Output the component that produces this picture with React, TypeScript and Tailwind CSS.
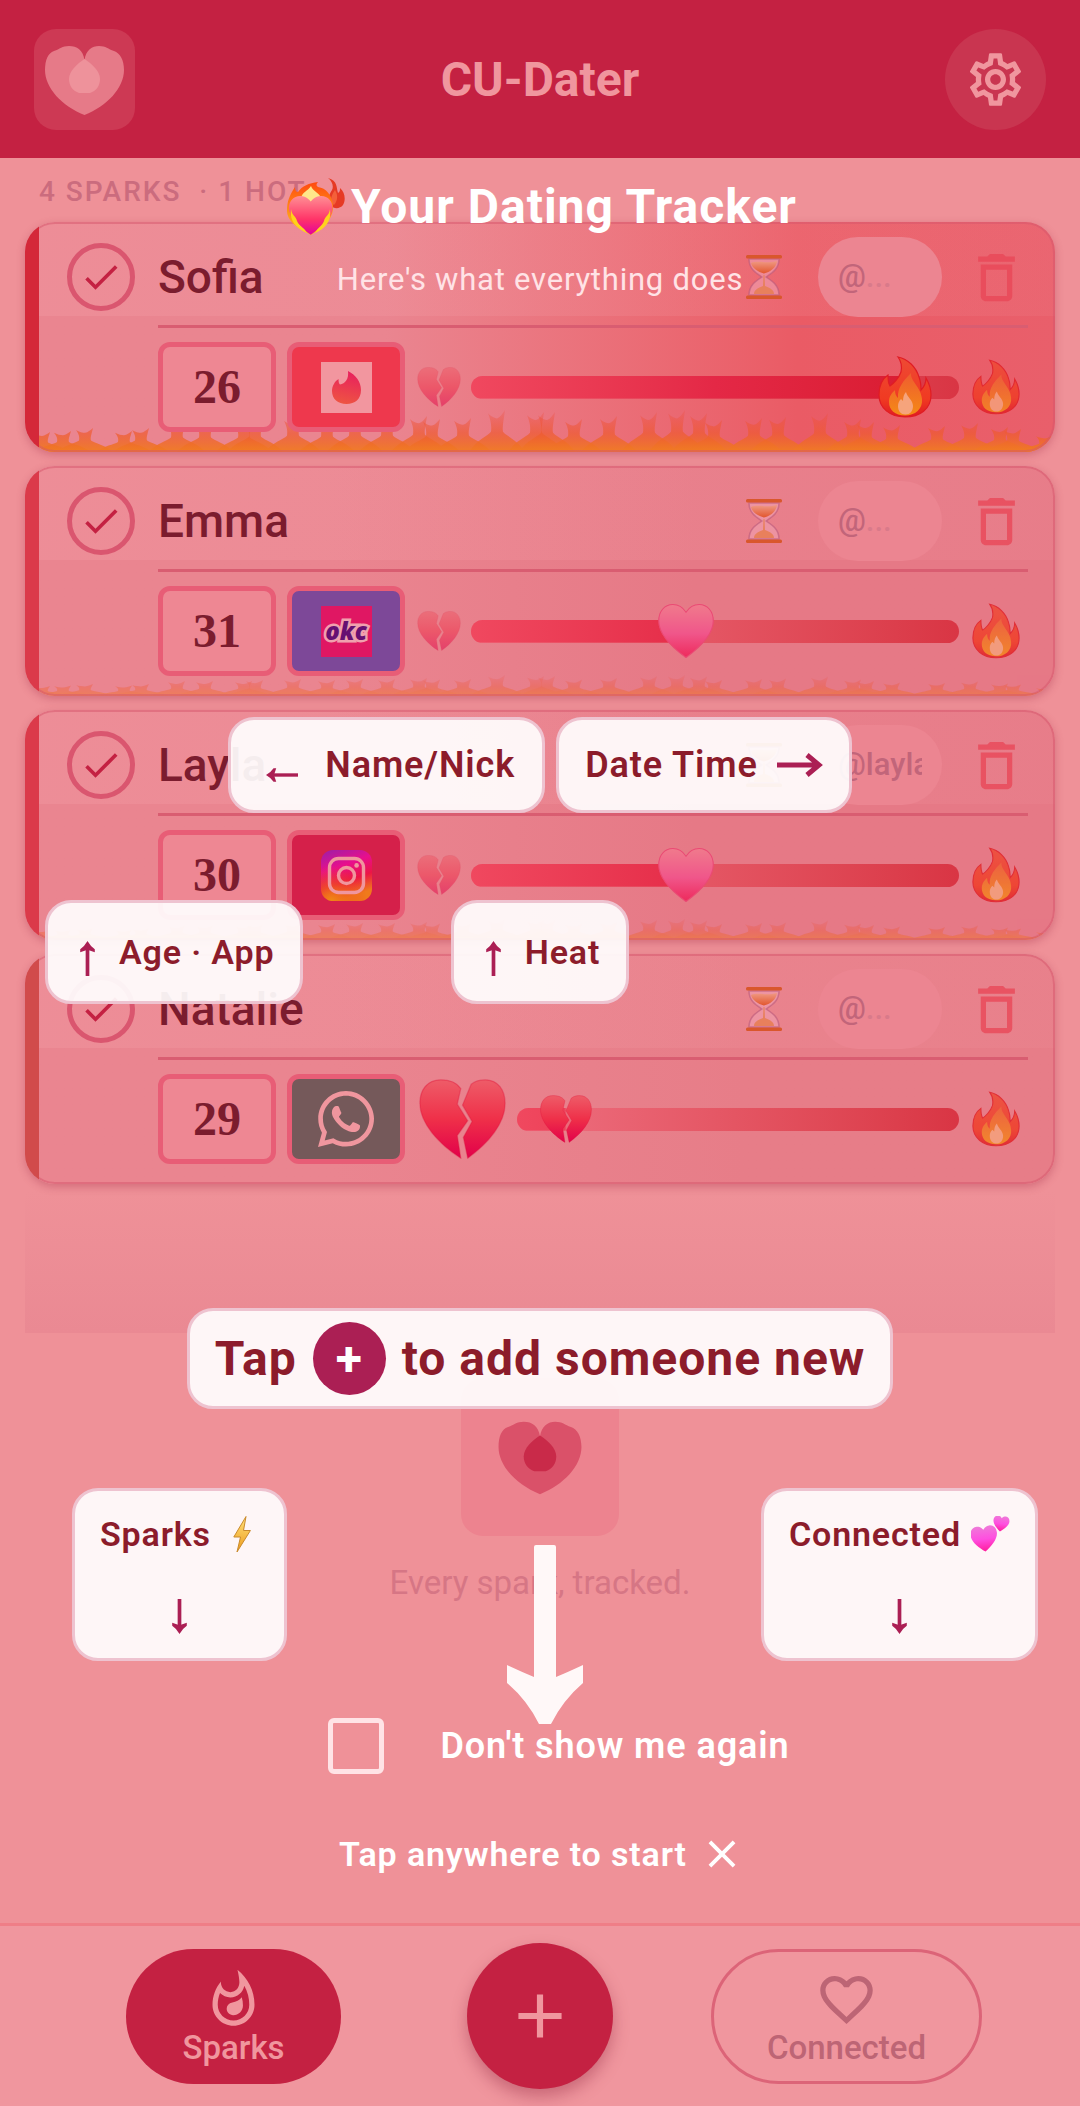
import { useState } from 'react'
import type { ReactNode } from 'react'
import {
  MdAdd, MdCheck, MdClose, MdDeleteOutline, MdFavoriteBorder, MdOutlineSettings, MdOutlineWhatshot,
} from 'react-icons/md'
import { FaWhatsapp } from 'react-icons/fa'

type AppName = 'tinder' | 'okcupid' | 'instagram' | 'whatsapp'

interface Person {
  name: string
  age: number
  app: AppName
  handle: string
  heat: number
  surface: string
  stripe: string
  flame: number
}

const people: Person[] = [
  { name: 'Sofia', age: 26, app: 'tinder', handle: '', heat: 89, flame: 1, stripe: 'bg-[#d42839]', surface: 'bg-linear-to-r from-[#ea8590] from-35% via-[#ea5b65] via-75% to-[#e95f6b]' },
  { name: 'Emma', age: 31, app: 'okcupid', handle: '', heat: 44, flame: 0.5, stripe: 'bg-[#db3a4a]', surface: 'bg-linear-to-r from-[#ea8590] from-30% to-[#e67986] to-65%' },
  { name: 'Layla', age: 30, app: 'instagram', handle: 'layla', heat: 44, flame: 0.5, stripe: 'bg-[#db3a4a]', surface: 'bg-linear-to-r from-[#ea8590] from-30% to-[#e67986] to-65%' },
  { name: 'Natalie', age: 29, app: 'whatsapp', handle: '', heat: 11, flame: 0, stripe: 'bg-[#d14b4b]', surface: 'bg-linear-to-r from-[#ea8590] from-30% to-[#e77d88] to-70%' },
]

const appColors: Record<AppName, string> = {
  tinder: 'bg-[#ee384d]',
  okcupid: 'bg-[#7d4898]',
  instagram: 'bg-[#d5204a]',
  whatsapp: 'bg-[#75595a]',
}

// [x, height] of every flame along the bottom edge of a card
const flames = [
  [17, 20], [38, 21], [60, 24], [99, 21], [116, 24], [152, 30], [180, 30], [219, 30], [230, 32], [268, 34], [302, 32],
  [330, 34], [362, 34], [394, 36], [407, 33], [438, 34], [472, 42], [511, 40], [522, 40], [549, 33], [584, 36],
  [624, 40], [652, 42], [674, 39], [689, 32], [729, 34], [753, 35], [795, 39], [828, 33], [841, 30], [867, 27],
  [912, 26], [945, 29], [975, 25], [988, 23], [1020, 17],
]

function flamePath(x: number, h: number) {
  const b = 50
  const neck = b - h * 0.48
  return `M${x - 28} ${b} C${x - 20} ${b - h * 0.3} ${x - 10} ${b - h * 0.36} ${x - 6} ${neck}` +
    ` C${x - 5} ${b - h * 0.66} ${x - 7} ${b - h * 0.8} ${x - 9} ${b - h * 0.92}` +
    ` C${x - 6} ${b - h * 0.84} ${x - 2} ${b - h * 0.8} ${x} ${b - h * 0.8}` +
    ` C${x + 3} ${b - h * 0.82} ${x + 5} ${b - h * 0.9} ${x + 8} ${b - h}` +
    ` C${x + 7} ${b - h * 0.8} ${x + 5} ${b - h * 0.6} ${x + 6} ${neck}` +
    ` C${x + 10} ${b - h * 0.36} ${x + 20} ${b - h * 0.3} ${x + 28} ${b} Z`
}

function Flames({ scale }: { scale: number }) {
  return (
    <svg
      viewBox="0 0 1030 50"
      preserveAspectRatio="none"
      className={`absolute bottom-0 left-0 h-[50px] w-full ${scale < 1 ? 'opacity-50' : ''}`}
      aria-hidden
    >
      <defs>
        <linearGradient id={`flame-${scale}`} gradientUnits="userSpaceOnUse" x1="0" y1="50" x2="0" y2={50 - 42 * scale}>
          <stop offset="0" stopColor="#f07d22" stopOpacity="0.95" />
          <stop offset="0.45" stopColor="#ee5a30" stopOpacity="0.7" />
          <stop offset="1" stopColor="#ee4a3c" stopOpacity="0.2" />
        </linearGradient>
      </defs>
      {flames.map(([x, h]) => (
        <path key={x} d={flamePath(x, h * scale)} fill={`url(#flame-${scale})`} />
      ))}
    </svg>
  )
}

const HEART = 'M50 14 C42 2 32 0 26 0 C10 0 0 13 0 30 C0 54 24 78 50 97 C76 78 100 54 100 30 C100 13 90 0 74 0 C68 0 58 2 50 14Z'
const FIRE = 'M19 0 C29 2 37 10 40 20 C42 25 42 29 42 33 C45 30 47 26 47 21 C50 26 52 32 52 38 C52 52 41 60 26 60 C11 60 0 51 0 38 C0 30 3 22 9 18 C9 22 9 26 11 29 C14 27 20 21 22 15 C23 10 22 4 19 0Z'

// Gradients shared by all the emoji below
function EmojiDefs() {
  return (
    <svg className="absolute size-0" aria-hidden>
      <defs>
        <linearGradient id="e-broken" x1="0" y1="0" x2="0" y2="1">
          <stop offset="0" stopColor="#ee5c68" />
          <stop offset="0.5" stopColor="#ef3049" />
          <stop offset="1" stopColor="#e2004a" />
        </linearGradient>
        <linearGradient id="e-pink" x1="0" y1="0" x2="0" y2="1">
          <stop offset="0" stopColor="#f07a8c" />
          <stop offset="0.55" stopColor="#f0568a" />
          <stop offset="1" stopColor="#ee2a5c" />
        </linearGradient>
        <linearGradient id="e-fire" x1="0" y1="0" x2="0" y2="1">
          <stop offset="0" stopColor="#ee4a34" />
          <stop offset="0.7" stopColor="#f03a22" />
          <stop offset="1" stopColor="#e01a22" />
        </linearGradient>
        <linearGradient id="e-fire-in" x1="0" y1="0" x2="0" y2="1">
          <stop offset="0" stopColor="#ee5c30" />
          <stop offset="1" stopColor="#f58a16" />
        </linearGradient>
        <linearGradient id="e-magenta" x1="0" y1="0" x2="0" y2="1">
          <stop offset="0" stopColor="#ee7ad8" />
          <stop offset="0.5" stopColor="#ff4fe0" />
          <stop offset="1" stopColor="#ff1c9c" />
        </linearGradient>
        <linearGradient id="e-hot" x1="0" y1="0" x2="0" y2="1">
          <stop offset="0" stopColor="#ff8f94" />
          <stop offset="0.6" stopColor="#ff3468" />
          <stop offset="1" stopColor="#e4009c" />
        </linearGradient>
        <linearGradient id="e-flame" x1="0" y1="0" x2="0" y2="1">
          <stop offset="0" stopColor="#ff4a10" />
          <stop offset="0.5" stopColor="#ff8a18" />
          <stop offset="1" stopColor="#ffc814" />
        </linearGradient>
        <linearGradient id="e-bolt" x1="0" y1="0" x2="0" y2="1">
          <stop offset="0" stopColor="#ffe27a" />
          <stop offset="1" stopColor="#ee9a1c" />
        </linearGradient>
        <linearGradient id="e-sand" x1="0" y1="0" x2="0" y2="1">
          <stop offset="0" stopColor="#f09a84" />
          <stop offset="1" stopColor="#e2562e" />
        </linearGradient>
      </defs>
    </svg>
  )
}

function BrokenHeart({ className }: { className: string }) {
  return (
    <svg viewBox="0 0 100 92" className={className} role="img" aria-label="Broken heart">
      <g fill="url(#e-broken)" stroke="#dc1038" strokeOpacity="0.35" strokeWidth="1.500">
        <path d="M48 11 C42 2 32 1 25 1 C9 1 1 13 1 28 C1 51 23 75 48 91 L44 65 L56 48 L44 29Z" />
        <path d="M60 6 C65 2 71 1 76 1 C91 1 99 13 99 28 C99 51 80 74 56 91 L51 67 L61 49 L50 30Z" />
      </g>
    </svg>
  )
}

function PinkHeart({ className }: { className: string }) {
  return (
    <svg viewBox="-1 -1 102 99" className={className} role="img" aria-label="Heart">
      <path d={HEART} fill="url(#e-pink)" stroke="#ea4a74" strokeWidth="2" />
    </svg>
  )
}

function Fire({ className }: { className: string }) {
  return (
    <svg viewBox="-1 -1 54 62" className={className} role="img" aria-label="Fire">
      <path d={FIRE} fill="url(#e-fire)" stroke="#e01c24" strokeWidth="1.200" />
      <path d="M32 16 C31 24 42 30 43 42 C44 52 36 58.500 26 58.500 C16 58.500 10 53 10 45 C10 39 13 36 16 33 C16 37 17 39 19 41 C18 31 25 23 32 16Z" fill="url(#e-fire-in)" />
      <path d="M27 35 C28 40 34 43 34 49 C34 54 31 57.500 26.500 57.500 C22 57.500 19 54 19 49 C19 46 20 44 22 42 L24 44 C24 40 25 37 27 35Z" fill="#f6a47c" />
    </svg>
  )
}

function Hourglass({ className }: { className: string }) {
  return (
    <svg viewBox="0 0 36 44" className={className} aria-hidden>
      <path
        d="M3 4 C3 14 10 18 16 22 C10 26 3 30 3 40 H33 C33 30 26 26 20 22 C26 18 33 14 33 4Z"
        fill="#f0a0b0" fillOpacity="0.6" stroke="#b9587a" strokeOpacity="0.6" strokeWidth="1.500"
      />
      <path d="M5 8 C12 5 20 9 31 6 C30 13 24 17 18 18.500 C12 17 6 13 5 8Z" fill="url(#e-sand)" />
      <path d="M17.500 20 H18.500 L19 31 C24 33 28 35 28 39 H8 C8 35 12 33 17 31Z" fill="#e8805c" />
      <rect width="36" height="3.400" rx="1.500" fill="#d9572c" />
      <rect y="40.600" width="36" height="3.400" rx="1.500" fill="#d9572c" />
    </svg>
  )
}

function Bolt() {
  return (
    <svg viewBox="0 0 18 37" className="h-[37px] w-[18px]" role="img" aria-label="Lightning">
      <path d="M13 .5 L.8 21 H7.500 L4 36 L17.400 14.500 H10.500 Z" fill="url(#e-bolt)" stroke="#c98a2c" strokeWidth="1" strokeLinejoin="round" />
    </svg>
  )
}

function TwoHearts() {
  return (
    <svg viewBox="0 0 39 36" className="h-9 w-[39px]" role="img" aria-label="Two hearts">
      <path d={HEART} transform="translate(0 10) rotate(-6 13 13) scale(.265)" fill="url(#e-magenta)" />
      <path d={HEART} transform="translate(22 0) rotate(8 8 8) scale(.16)" fill="url(#e-magenta)" />
    </svg>
  )
}

function HeartOnFire() {
  return (
    <svg viewBox="0 0 58 58" className="size-[58px]" role="img" aria-label="Heart on fire">
      <path d="M41 0 C51 3 49 9 51 15 C53 14 53 12 53 10 C58 14 59 22 56 27 C53 31 47 31 44 28 C39 23 42 17 45 12 C47 8 45 3 41 0Z" fill="#e63a24" />
      <path d="M48 12 C51 17 51 22 47 27 C43 25 43 19 48 12Z" fill="#f4603a" />
      <path d="M0 33 C0 24 2 18 8 9 C8 12 9 14 11 14 C15 8 22 5 31 4 C29 6 29 8 31 9 C39 10 45 17 46 27 C47 38 40 48 24 57 C9 50 0 42 0 33Z" fill="url(#e-flame)" />
      <path d="M14 20 C16 13 20 14 24 8 C26 14 32 14 34 20 L24 28Z" fill="#ffe88a" />
      <path d={HEART} transform="translate(2 18) scale(.435 .4)" fill="url(#e-hot)" />
      <path d="M4 31 C5 38 9 38 10 43 C12 48 17 49 20 55 C10 51 2 43 4 31Z M43 31 C42 38 38 38 37 43 C35 48 31 49 28 55 C38 51 45 43 43 31Z" fill="#ffd21c" />
    </svg>
  )
}

function HeartMark({ heart, drop, className }: { heart: string; drop: string; className: string }) {
  return (
    <svg viewBox="0 0 101 101" className={className} aria-hidden>
      <path
        className={heart}
        d="M50.5 31 C49 21 43 17 35 17 C28 17 26 20 20 22 C14 24 11 31 11 41 C11 59 28 77 50.5 86 C73 77 90 59 90 41 C90 31 86 24 80 22 C74 20 72 17 65 17 C58 17 52 21 50.5 31Z"
      />
      <path className={drop} d="M50.5 30 C58 35 66 42 66 50 C66 57 62 62 56 64 H45 C39 62 35 57 35 50 C35 42 43 35 50.5 30Z" />
    </svg>
  )
}

function AppIcon({ app }: { app: AppName }) {
  if (app === 'whatsapp') return <FaWhatsapp size={64} className="text-[#f0969e]" />
  if (app === 'okcupid') {
    return (
      <span className="flex size-[51px] items-center justify-center bg-[#e01763] font-['Open_Sans',sans-serif] text-[24px] leading-none font-extrabold italic text-[#660f72] [-webkit-text-stroke:5px_#f0a0ae] [paint-order:stroke_fill]">
        okc
      </span>
    )
  }
  if (app === 'instagram') {
    return (
      <svg viewBox="0 0 51 51" className="size-[51px]" aria-hidden>
        <defs>
          <linearGradient id="ig-base" x1="0" y1="0" x2="0.35" y2="1">
            <stop offset="0" stopColor="#9a1fa8" />
            <stop offset="0.4" stopColor="#e80f8c" />
            <stop offset="0.7" stopColor="#ec1546" />
            <stop offset="1" stopColor="#f07a1c" />
          </linearGradient>
          <radialGradient id="ig-glow" cx="0.2" cy="1" r="0.7">
            <stop offset="0" stopColor="#f08a14" />
            <stop offset="1" stopColor="#f03a20" stopOpacity="0" />
          </radialGradient>
        </defs>
        <rect width="51" height="51" rx="12" fill="url(#ig-base)" />
        <rect width="51" height="51" rx="12" fill="url(#ig-glow)" />
        <g fill="none" stroke="#f0969e" strokeWidth="3.400">
          <rect x="8.500" y="8.500" width="34" height="34" rx="9" />
          <circle cx="25.500" cy="25.500" r="8" />
        </g>
        <circle cx="35.600" cy="15.400" r="2.300" fill="#f0969e" />
      </svg>
    )
  }
  return (
    <svg viewBox="0 0 51 51" className="size-[51px]" aria-hidden>
      <defs>
        <linearGradient id="tinder" x1="0.6" y1="0" x2="0.4" y2="1">
          <stop offset="0" stopColor="#e8205e" />
          <stop offset="1" stopColor="#ee5442" />
        </linearGradient>
      </defs>
      <rect width="51" height="51" fill="#f2969f" />
      <path
        fill="url(#tinder)"
        d="M27 9 C35 13 40 20 40 28 C40 37 34 42 25.500 42 C17 42 11 37 11 29 C11 24 14 19 17.500 17 C17.500 20 18 22 19 22.500 C24 22 28 17 27 9Z"
      />
    </svg>
  )
}

function HeatThumb({ heat }: { heat: number }) {
  if (heat > 75) return <Fire className="h-[62px] w-[54px]" />
  if (heat > 20) return <PinkHeart className="h-[54px] w-[56px]" />
  return <BrokenHeart className="h-12 w-[52px]" />
}

function HeatSlider({ person }: { person: Person }) {
  const [heat, setHeat] = useState(person.heat)
  return (
    <label className="relative flex h-[60px] flex-1 items-center">
      <span className="sr-only">Heat for {person.name}</span>
      <span className="absolute inset-x-0 h-[23px] rounded-full bg-linear-to-r from-[#ee6f80] to-[#d93544]" />
      <span
        className="absolute inset-x-0 h-[23px] rounded-full bg-linear-to-r from-[#f0485f] via-[#e42846] via-50% to-[#d7192c]"
        style={{ clipPath: `inset(0 ${100 - heat}% 0 0)` }}
      />
      <span className="absolute -translate-x-1/2" style={{ left: `${heat}%` }}>
        <HeatThumb heat={heat} />
      </span>
      <input
        type="range"
        min={0}
        max={100}
        value={heat}
        onChange={(e) => setHeat(Number(e.target.value))}
        className="absolute inset-0 w-full cursor-pointer opacity-0"
      />
    </label>
  )
}

function PersonCard({ person }: { person: Person }) {
  const cold = person.heat < 20
  return (
    <li className={`relative overflow-hidden rounded-[30px] shadow-[0_3px_8px_rgba(150,30,60,0.3)] ${person.surface}`}>
      <div className="absolute inset-x-0 top-0 h-[94px] bg-linear-to-r from-[#f5a0a8]/30 to-[#f5a0a8]/10" />
      {person.flame > 0 && <Flames scale={person.flame} />}
      <div className="pointer-events-none absolute inset-0 rounded-[30px] border-2 border-[#d5566b]/50" />
      <div className={`absolute inset-y-0 left-0 w-3.5 ${person.stripe}`} />

      <div className="relative flex h-[103px] items-center pt-[7px] pl-[42px] pr-[27px]">
        <button
          aria-label={`Connect with ${person.name}`}
          className="flex size-[68px] shrink-0 items-center justify-center rounded-full border-5 border-[#da566f] text-[#c42142]"
        >
          <MdCheck size={44} />
        </button>
        <h2 className="ml-[23px] flex-1 text-[46px] leading-none font-medium text-[#7b1c2e]">{person.name}</h2>
        <button aria-label="Date time" className="flex w-[60px] justify-center">
          <Hourglass className="h-11 w-9" />
        </button>
        <label className="ml-6 flex h-20 w-[124px] items-center rounded-full bg-[#ec8591] px-5 text-[31px] font-medium text-[#c2657a]">
          @
          <input
            defaultValue={person.handle}
            placeholder="..."
            aria-label={`${person.name} handle`}
            className="w-full min-w-0 bg-transparent placeholder:text-[#d97a8a]"
          />
        </label>
        <button aria-label={`Delete ${person.name}`} className="ml-[23px] text-[#e94757]/80">
          <MdDeleteOutline size={63} />
        </button>
      </div>

      <div className="relative ml-[133px] mr-[27px] h-[3px] bg-[#d95d71]" />

      <div className="relative flex h-[124px] items-center pl-[133px] pr-[27px] pb-[6px]">
        <button className="h-[90px] w-[118px] rounded-xl border-5 border-[#e85d76] bg-[#ee8793] font-['Liberation_Serif',serif] text-[48px] leading-none font-bold text-[#7b1c2e]">
          {person.age}
        </button>
        <button
          aria-label={person.app}
          className={`ml-[11px] flex h-[90px] w-[118px] items-center justify-center rounded-xl border-5 border-[#e85d76] ${appColors[person.app]}`}
        >
          <AppIcon app={person.app} />
        </button>
        <span className={`ml-[7px] mr-[5px] flex justify-center ${cold ? 'w-[100px]' : 'w-[54px] opacity-50'}`}>
          <BrokenHeart className={cold ? 'h-20 w-[87px]' : 'h-10 w-11'} />
        </span>
        <HeatSlider person={person} />
        <span className="ml-[5px] flex w-16 justify-center opacity-80">
          <Fire className="h-14 w-12" />
        </span>
      </div>
    </li>
  )
}

function Tip({ children, className = '' }: { children: ReactNode; className?: string }) {
  return (
    <div className={`flex items-center rounded-[26px] border-3 border-[#eec3d0] bg-white/92 text-[#8c1c2b] ${className}`}>
      {children}
    </div>
  )
}

function Arrow({ dir, size, className = '' }: { dir: 'left' | 'up' | 'down'; size: number; className?: string }) {
  const turn = { left: 'rotate-180', up: '-rotate-90', down: 'rotate-90' }[dir]
  return (
    <svg viewBox="0 0 36 36" width={size} height={size} className={`shrink-0 text-[#ab1f54] ${turn} ${className}`} aria-hidden>
      <path d="M0 18 H32" stroke="currentColor" strokeWidth="3.800" />
      <path d="M24.500 10.500 H27.500 Q30 14.500 36 18 Q30 21.500 27.500 25.500 H24.500 L27 18Z" fill="currentColor" />
    </svg>
  )
}

function Guide() {
  return (
    <div className="absolute inset-0 flex flex-col items-center pt-[176px] text-white">
      <h2 className="flex h-[62px] items-center gap-1.5 pl-1 text-[48px] leading-none font-bold tracking-[1px]">
        <HeartOnFire />Your Dating Tracker
      </h2>
      <p className="mt-[22px] flex h-10 items-center text-[31px] tracking-wide text-[#ffe3e6]">
        Here's what everything does
      </p>

      <div className="mt-[417px] flex gap-[11px] text-[36px] font-semibold tracking-wide">
        <Tip className="h-24 gap-[27px] pl-[35px] pr-[27px]"><Arrow dir="left" size={32} className="mt-5" />Name/Nick</Tip>
        <Tip className="h-24 gap-[19px] px-[26px]">
          Date Time
          <svg viewBox="0 0 46 24" className="h-6 w-[46px]" fill="none" stroke="#ab1f54" strokeWidth="5" aria-hidden>
            <path d="M0 12 H42 M30 2 L42 12 L30 22" />
          </svg>
        </Tip>
      </div>

      <div className="mt-[87px] grid w-full grid-cols-3 items-center text-[34px] font-semibold tracking-wide">
        <Tip className="ml-[45px] h-[104px] gap-3.5 justify-self-start pl-[22px] pr-[26px]"><Arrow dir="up" size={35} className="mt-3" />Age · App</Tip>
        <Tip className="h-[104px] gap-3.5 justify-self-center pl-[22px] pr-[26px]"><Arrow dir="up" size={35} className="mt-3" />Heat</Tip>
      </div>

      <Tip className="mt-[304px] h-[101px] gap-4 px-[25px] text-[48px] font-bold tracking-[1px]">
        Tap
        <span className="flex size-[73px] items-center justify-center rounded-full bg-[#ab1f54] text-white">+</span>
        to add someone new
      </Tip>

      <div className="mt-[79px] grid w-full grid-cols-[1fr_auto_1fr] items-start text-[34px] font-semibold tracking-wide">
        <Tip className="ml-[72px] h-[173px] flex-col justify-between justify-self-start px-[25px] pt-[18px] pb-6">
          <span className="flex h-[50px] items-center gap-[22px] pr-2">Sparks <Bolt /></span>
          <Arrow dir="down" size={35} />
        </Tip>
        <svg viewBox="0 0 76 179" className="mt-[57px] ml-2.5 h-[179px] w-[76px] text-[#fff8f8]" aria-hidden>
          <path
            fill="currentColor"
            d="M29 0 H47 Q49 0 49 2 V132 Q61 127 76 120 V138 Q56 155 44 179 H32 Q20 155 0 138 V120 Q15 127 27 132 V2 Q27 0 29 0Z"
          />
        </svg>
        <Tip className="mr-[42px] h-[173px] flex-col justify-between justify-self-end px-[25px] pt-[18px] pb-6">
          <span className="flex h-[50px] items-center gap-2.5">Connected <TwoHearts /></span>
          <Arrow dir="down" size={35} />
        </Tip>
      </div>

      <label className="-mt-1.5 flex h-14 items-center gap-14 pl-[38px] text-[36px] font-semibold tracking-wide">
        <input type="checkbox" className="size-14 appearance-none rounded-md border-5 border-[#ffe3e6] checked:bg-[#ffe3e6]" />
        Don't show me again
      </label>
      <button className="mt-14 flex h-12 items-center gap-3 pl-1 text-[34px] font-semibold tracking-wide">
        Tap anywhere to start
        <MdClose size={46} />
      </button>
    </div>
  )
}

export default function App() {
  return (
    <div className="relative flex min-h-screen flex-col bg-[#ef9198] font-[Roboto,sans-serif]">
      <EmojiDefs />
      <header className="flex h-[158px] items-center justify-between bg-[#c42142] px-[34px] text-[#f0969e]">
        <div className="rounded-[22px] bg-[#cd3954]">
          <HeartMark className="size-[101px]" heart="fill-[#e67a88]" drop="fill-[#ee929b]" />
        </div>
        <h1 className="pt-0.5 text-[48px] leading-none font-bold">CU-Dater</h1>
        <button aria-label="Settings" className="flex size-[101px] items-center justify-center rounded-full bg-[#c93550]">
          <MdOutlineSettings size={63} />
        </button>
      </header>

      <main className="flex-1 px-[25px]">
        <p className="flex h-16 items-center pt-1 pl-3.5 text-[28px] font-medium tracking-[2px] whitespace-pre text-[#cb6c7e]">
          {'4 SPARKS  · 1 HOT'}
        </p>
        <ul className="flex flex-col gap-3.5">
          {people.map((p) => <PersonCard key={p.name} person={p} />)}
        </ul>
        <div className="mt-1.5 h-[143px] bg-linear-to-b from-[#ef9198] to-[#ea8993]" />
        <div className="mt-[45px] flex flex-col items-center">
          <div className="flex size-[158px] items-center justify-center rounded-[22px] bg-[#ed838f]">
            <HeartMark className="size-[106px]" heart="fill-[#da5169]" drop="fill-[#c92a49]" />
          </div>
          <p className="mt-[27px] flex h-10 items-center text-[33px] text-[#d67685]">Every spark, tracked.</p>
        </div>
      </main>

      <Guide />

      <nav className="relative flex h-[183px] items-center border-t-3 border-[#ef7e87] bg-[#f0969e] text-[33px] leading-none font-medium">
        <div className="flex flex-1 justify-center">
          <button className="flex h-[135px] w-[215px] flex-col items-center justify-center rounded-full bg-[#c42142] text-[#f0969e]">
            <MdOutlineWhatshot size={63} />
            Sparks
          </button>
        </div>
        <button
          aria-label="Add someone"
          className="flex size-[146px] items-center justify-center rounded-full bg-[#c42142] text-[#f0969e] shadow-[0_8px_16px_rgba(130,20,50,0.35)]"
        >
          <MdAdd size={74} />
        </button>
        <div className="flex flex-1 justify-center">
          <button className="flex h-[135px] w-[271px] flex-col items-center justify-center rounded-full border-3 border-[#dc6478] text-[#bd6575]">
            <MdFavoriteBorder size={63} />
            Connected
          </button>
        </div>
      </nav>
    </div>
  )
}
